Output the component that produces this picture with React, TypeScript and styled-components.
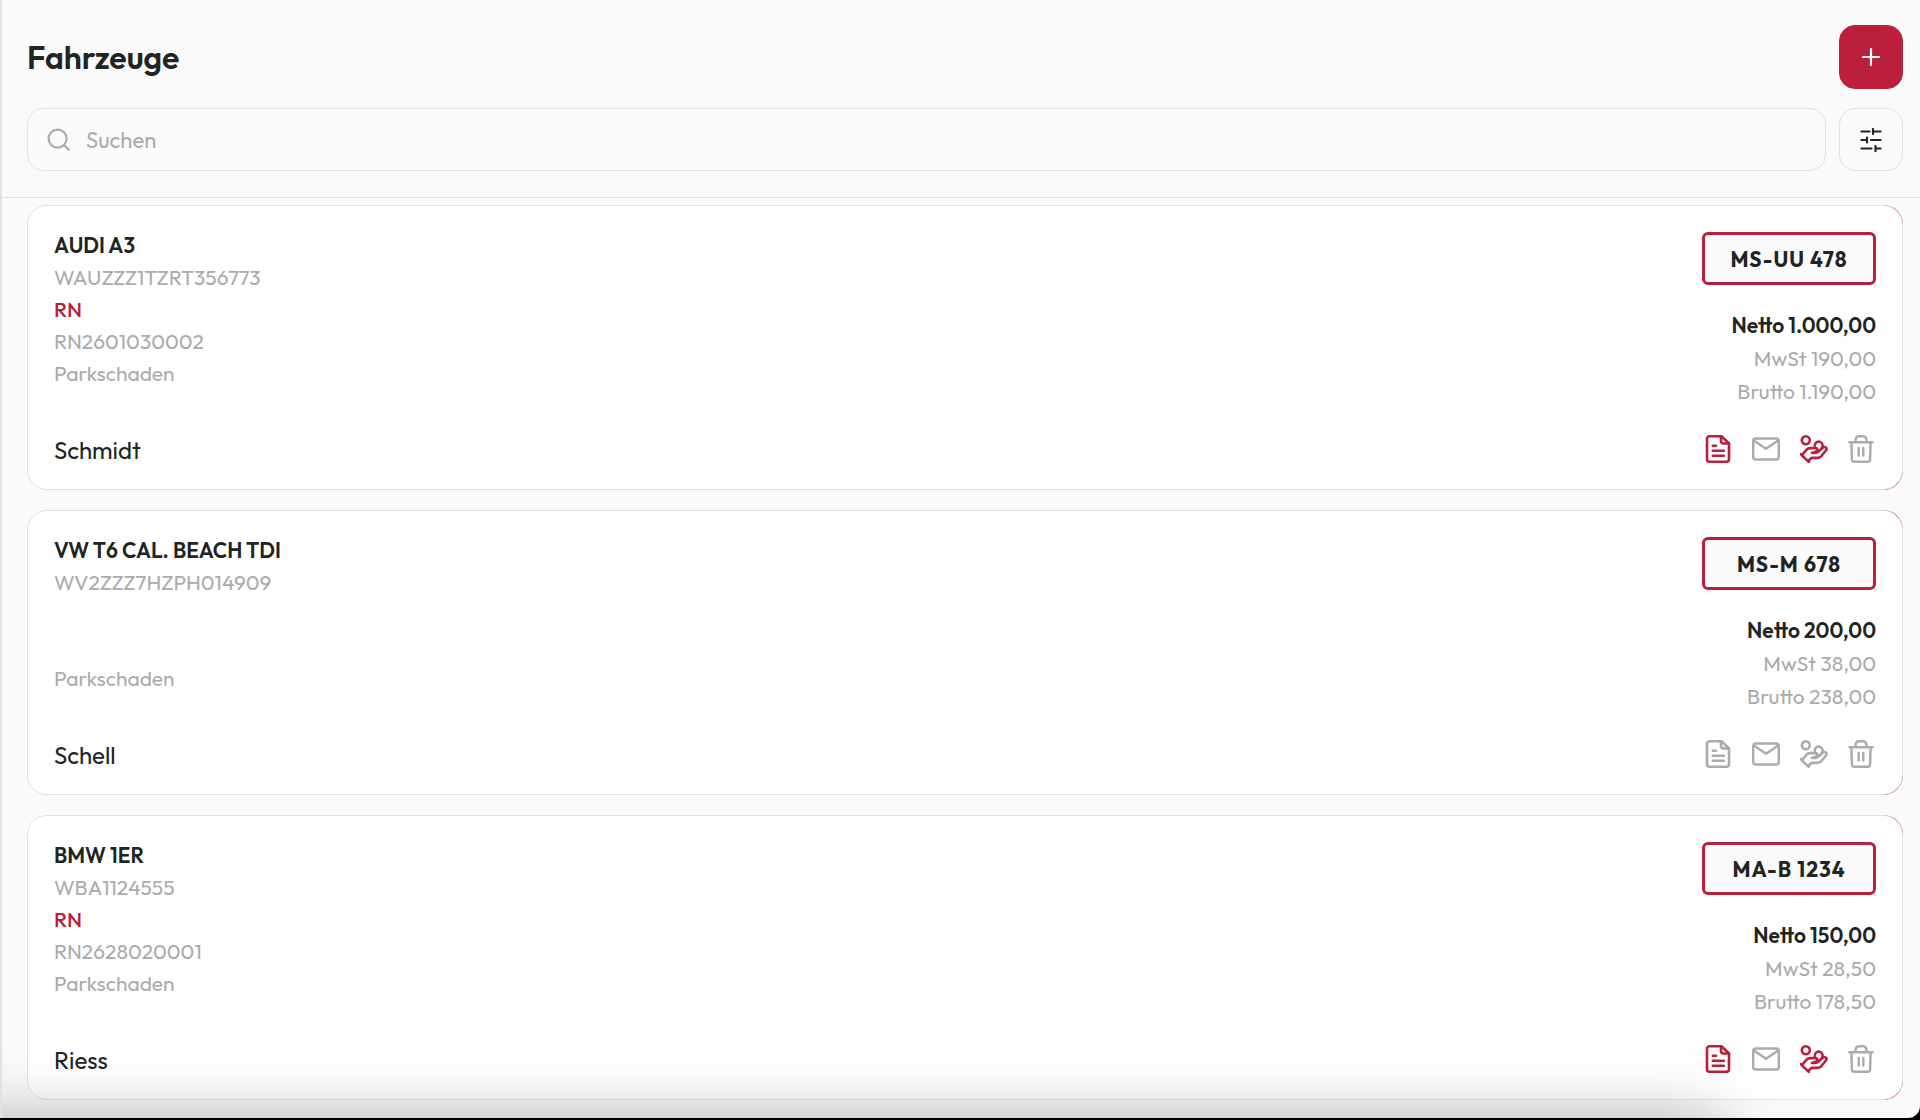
import React from 'react';
import styled, { createGlobalStyle } from 'styled-components';

const color = {
  page: '#fafafa',
  surface: '#ffffff',
  line: '#e1e2e2',
  ink: '#202423',
  muted: '#a9acab',
  accent: '#ba1f3b',
};

const GlobalStyle = createGlobalStyle`
  *, *::before, *::after { box-sizing: border-box; }
  body {
    margin: 0;
    background: #000;
    color: ${color.ink};
    font-family: Outfit, Lato, sans-serif;
    -webkit-font-smoothing: antialiased;
  }
  button, input { font: inherit; color: inherit; }
  button { cursor: pointer; }
`;

const Page = styled.main`
  position: relative;
  overflow: hidden;
  min-height: calc(100vh - 2px);
  background: ${color.page};
  border-left: 2px solid ${color.line};
  border-bottom-right-radius: 12px;
`;

const BottomShade = styled.div`
  position: absolute;
  left: -100px;
  right: 190px;
  bottom: -100px;
  height: 100px;
  border-radius: 40px;
  box-shadow: 0 0 64px rgba(0, 0, 0, 0.29);
  pointer-events: none;
`;

const Header = styled.header`
  display: flex;
  flex-direction: column;
  gap: 19px;
  padding: 25px 17px 26px 25px;
  border-bottom: 1px solid ${color.line};
`;

const HeaderRow = styled.div`
  display: flex;
  align-items: center;
  justify-content: space-between;
  gap: 13px;
`;

const Heading = styled.h1`
  margin: 0;
  font-size: 32px;
  line-height: 40px;
  font-weight: 600;
`;

const SquareButton = styled.button<{ $filled?: boolean }>`
  display: flex;
  align-items: center;
  justify-content: center;
  flex: none;
  width: 64px;
  height: ${({ $filled }) => ($filled ? '64px' : '63px')};
  padding: 0;
  border: 1px solid ${({ $filled }) => ($filled ? color.accent : color.line)};
  border-radius: 16px;
  background: ${({ $filled }) => ($filled ? color.accent : 'transparent')};
  color: ${({ $filled }) => ($filled ? '#fff' : color.ink)};
`;

const SearchField = styled.label`
  display: flex;
  align-items: center;
  gap: 15px;
  flex: 1;
  height: 63px;
  padding: 0 19px;
  border: 1px solid ${color.line};
  border-radius: 16px;
  color: ${color.muted};
`;

const SearchInput = styled.input`
  flex: 1;
  min-width: 0;
  padding: 0;
  border: 0;
  outline: 0;
  background: transparent;
  color: ${color.ink};
  font-size: 22px;
  line-height: 28px;
  &::placeholder { color: ${color.muted}; opacity: 1; }
`;

const List = styled.ul`
  display: flex;
  flex-direction: column;
  gap: 20px;
  margin: 0;
  padding: 7px 17px 18px 25px;
  list-style: none;
`;

const SwipeRow = styled.li`
  border-radius: 20px;
  background: linear-gradient(to left, ${color.accent} 80px, transparent 80px);
`;

const Card = styled.article`
  display: flex;
  justify-content: space-between;
  padding: 25px 26px 26px;
  border: 1px solid ${color.line};
  border-radius: 20px;
  background: ${color.surface};
`;

const Details = styled.div`
  display: flex;
  flex-direction: column;
  justify-content: space-between;
`;

const Lines = styled.div`
  display: flex;
  flex-direction: column;
  gap: 4px;
  font-size: 21px;
  line-height: 28px;
`;

const Model = styled.h2`
  margin: 0;
  font-size: inherit;
  font-weight: 600;
`;

const Detail = styled.span`
  min-height: 28px;
  color: ${color.muted};
`;

const Status = styled.span`
  min-height: 28px;
  font-weight: 500;
  color: ${color.accent};
`;

const Customer = styled.span`
  font-size: 24px;
  line-height: 26px;
`;

const Summary = styled.div`
  display: flex;
  flex-direction: column;
  align-items: flex-end;
  padding-top: 1px;
`;

const Plate = styled.div`
  display: flex;
  align-items: center;
  justify-content: center;
  width: 174px;
  height: 53px;
  border: 3px solid ${color.accent};
  border-radius: 6px;
  background: ${color.page};
  font-size: 21px;
  line-height: 26px;
  font-weight: 700;
  letter-spacing: 1px;
`;

const Prices = styled.div`
  display: flex;
  flex-direction: column;
  align-items: flex-end;
  margin: 24px 0 27px;
`;

const Price = styled.span<{ $strong?: boolean }>`
  font-size: 21px;
  line-height: 33px;
  font-weight: ${({ $strong }) => ($strong ? 600 : 400)};
  color: ${({ $strong }) => ($strong ? color.ink : color.muted)};
`;

const Actions = styled.div`
  display: flex;
  gap: 20px;
`;

const ActionButton = styled.button<{ $active?: boolean }>`
  display: flex;
  width: 28px;
  height: 28px;
  padding: 0;
  border: 0;
  background: transparent;
  color: ${({ $active }) => ($active ? color.accent : color.muted)};
`;

const Icon = styled.svg`
  display: block;
  flex: none;
  fill: none;
  stroke: currentColor;
  stroke-linecap: round;
  stroke-linejoin: round;
`;

const PlusIcon = () => (
  <Icon width="24" height="24" viewBox="0 0 24 24" strokeWidth="2.2" aria-hidden="true">
    <path d="M12 4v16M4 12h16" />
  </Icon>
);

const SearchIcon = () => (
  <Icon width="24" height="24" viewBox="0 0 24 24" strokeWidth="2.2" aria-hidden="true">
    <circle cx="10.600" cy="10.600" r="9" />
    <path d="M17.200 17.200L21.600 21.600" />
  </Icon>
);

const FilterIcon = () => (
  <Icon width="24" height="24" viewBox="0 0 24 24" strokeWidth="2.2" aria-hidden="true">
    <path d="M2.500 3.500h8M14 1v5M14 3.500h7.500M2.500 12h5.500M8 9.500v5M12 12h9.500M2.500 20.500h10M16.500 18v5M16.500 20.500h5" />
  </Icon>
);

const DocumentIcon = () => (
  <Icon width="28" height="28" viewBox="0 0 28 28" strokeWidth="2.600" aria-hidden="true">
    <path d="M17.500 1.300H5.500a2.500 2.500 0 0 0-2.500 2.500v20.400a2.500 2.500 0 0 0 2.500 2.500h17a2.500 2.500 0 0 0 2.500-2.500V8.500z" />
    <path d="M17 1.500v4.500a2.500 2.500 0 0 0 2.500 2.500H25M8.800 10.700h3.200M8.800 15.700h11M8.800 20.700h11" />
  </Icon>
);

const MailIcon = () => (
  <Icon width="28" height="28" viewBox="0 0 28 28" strokeWidth="2.400" aria-hidden="true">
    <rect x="1.200" y="3.500" width="25.600" height="21" rx="2.600" />
    <path d="M1.800 5.500l12.200 8.200L26.200 5.500" />
  </Icon>
);

const HandCoinsIcon = () => (
  <Icon width="28" height="28" viewBox="0 0 28 28" strokeWidth="2.600" aria-hidden="true">
    <circle cx="5.800" cy="5.300" r="4" />
    <path d="M14.800 11.600a4 4 0 1 1 6.900 1.600" />
    <path d="M.7 19.200l8 7.700" />
    <path d="M2.300 19.700l4.600-5.300c.8-.9 1.700-1.300 2.900-1.300h5.500c2.700 0 2.500 2.900.4 3.600l-3.800 1.200h3.400c1.200 0 2-.3 2.900-1.100l4.500-4c2.200-1.900 4.900.4 3.200 2.700l-4.700 5.800c-.9 1.100-1.800 1.600-3.200 1.600h-5.300c-1 0-1.700.2-2.400 1l-1.700 2" />
  </Icon>
);

const TrashIcon = () => (
  <Icon width="28" height="28" viewBox="0 0 28 28" strokeWidth="2.400" aria-hidden="true">
    <path d="M1.400 7.200h23.200M7.400 7.200c0-3.700.8-5.900 3.300-5.900h4.600c2.500 0 3.300 2.200 3.300 5.900M3.400 7.200l.5 17.300a2.300 2.300 0 0 0 2.300 2.200h13.600a2.300 2.300 0 0 0 2.300-2.200L22.600 7.200M10.700 13v7.500M15.300 13v7.500" />
  </Icon>
);

interface Vehicle {
  model: string;
  vin: string;
  status?: string;
  invoice?: string;
  damage: string;
  customer: string;
  plate: string;
  net: string;
  tax: string;
  gross: string;
}

const vehicles: Vehicle[] = [
  {
    model: 'AUDI A3', vin: 'WAUZZZ1TZRT356773', status: 'RN', invoice: 'RN2601030002',
    damage: 'Parkschaden', customer: 'Schmidt', plate: 'MS-UU 478',
    net: '1.000,00', tax: '190,00', gross: '1.190,00',
  },
  {
    model: 'VW T6 CAL. BEACH TDI', vin: 'WV2ZZZ7HZPH014909',
    damage: 'Parkschaden', customer: 'Schell', plate: 'MS-M 678',
    net: '200,00', tax: '38,00', gross: '238,00',
  },
  {
    model: 'BMW 1ER', vin: 'WBA1124555', status: 'RN', invoice: 'RN2628020001',
    damage: 'Parkschaden', customer: 'Riess', plate: 'MA-B 1234',
    net: '150,00', tax: '28,50', gross: '178,50',
  },
];

function VehicleCard({ vehicle }: { vehicle: Vehicle }) {
  const invoiced = Boolean(vehicle.invoice);
  return (
    <SwipeRow>
      <Card>
        <Details>
          <Lines>
            <Model>{vehicle.model}</Model>
            <Detail>{vehicle.vin}</Detail>
            <Status>{vehicle.status}</Status>
            <Detail>{vehicle.invoice}</Detail>
            <Detail>{vehicle.damage}</Detail>
          </Lines>
          <Customer>{vehicle.customer}</Customer>
        </Details>
        <Summary>
          <Plate>{vehicle.plate}</Plate>
          <Prices>
            <Price $strong>Netto {vehicle.net}</Price>
            <Price>MwSt {vehicle.tax}</Price>
            <Price>Brutto {vehicle.gross}</Price>
          </Prices>
          <Actions>
            <ActionButton type="button" $active={invoiced} aria-label="Rechnung"><DocumentIcon /></ActionButton>
            <ActionButton type="button" aria-label="E-Mail"><MailIcon /></ActionButton>
            <ActionButton type="button" $active={invoiced} aria-label="Zahlung"><HandCoinsIcon /></ActionButton>
            <ActionButton type="button" aria-label="Löschen"><TrashIcon /></ActionButton>
          </Actions>
        </Summary>
      </Card>
    </SwipeRow>
  );
}

export default function App() {
  return (
    <>
      <GlobalStyle />
      <Page>
        <Header>
          <HeaderRow>
            <Heading>Fahrzeuge</Heading>
            <SquareButton type="button" $filled aria-label="Fahrzeug hinzufügen"><PlusIcon /></SquareButton>
          </HeaderRow>
          <HeaderRow>
            <SearchField>
              <SearchIcon />
              <SearchInput type="search" placeholder="Suchen" aria-label="Suchen" />
            </SearchField>
            <SquareButton type="button" aria-label="Filter"><FilterIcon /></SquareButton>
          </HeaderRow>
        </Header>
        <List>
          {vehicles.map((vehicle) => (
            <VehicleCard key={vehicle.vin} vehicle={vehicle} />
          ))}
        </List>
        <BottomShade />
      </Page>
    </>
  );
}
